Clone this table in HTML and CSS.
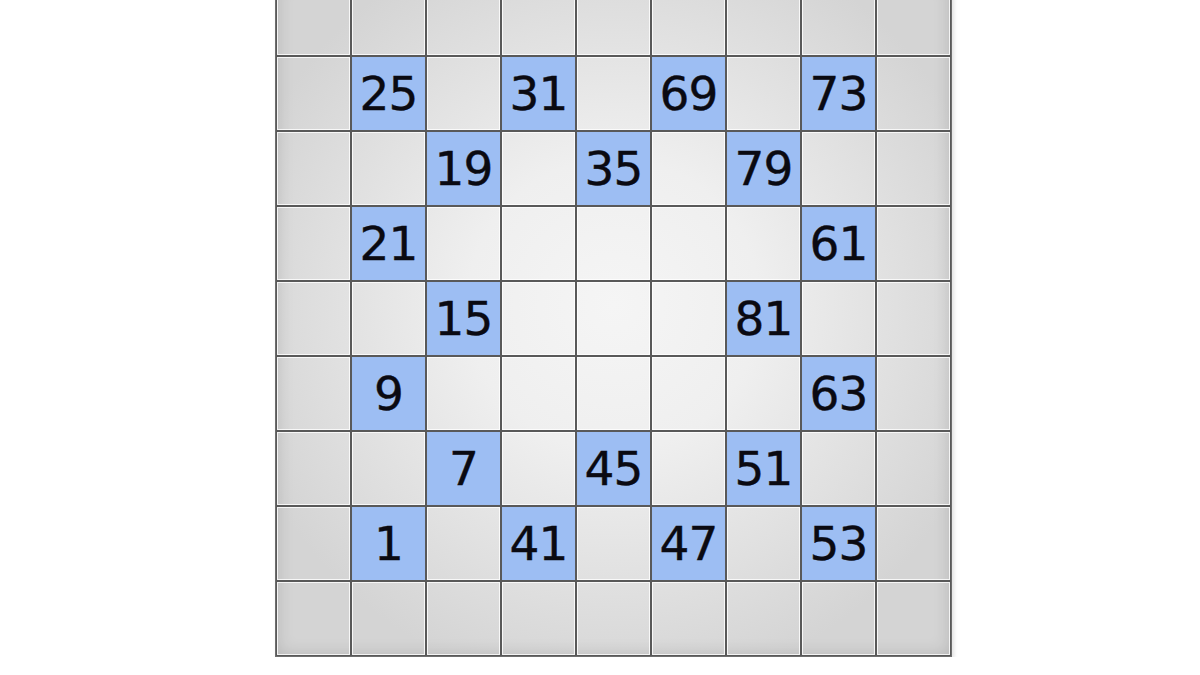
FILE: index.html
```html
<!DOCTYPE html>
<html lang="en">
<head>
    <meta charset="UTF-8">
    <meta name="viewport" content="width=device-width, initial-scale=1.0">
    <title>Number Grid</title>
    <link rel="stylesheet" href="styles.css">
</head>
<body>

<div class="board">
    <!-- row 0 -->
    <div class="cell"></div><div class="cell"></div><div class="cell"></div><div class="cell"></div><div class="cell"></div><div class="cell"></div><div class="cell"></div><div class="cell"></div><div class="cell"></div>
    <!-- row 1 -->
    <div class="cell"></div><div class="cell on">25</div><div class="cell"></div><div class="cell on">31</div><div class="cell"></div><div class="cell on">69</div><div class="cell"></div><div class="cell on">73</div><div class="cell"></div>
    <!-- row 2 -->
    <div class="cell"></div><div class="cell"></div><div class="cell on">19</div><div class="cell"></div><div class="cell on">35</div><div class="cell"></div><div class="cell on">79</div><div class="cell"></div><div class="cell"></div>
    <!-- row 3 -->
    <div class="cell"></div><div class="cell on">21</div><div class="cell"></div><div class="cell"></div><div class="cell"></div><div class="cell"></div><div class="cell"></div><div class="cell on">61</div><div class="cell"></div>
    <!-- row 4 -->
    <div class="cell"></div><div class="cell"></div><div class="cell on">15</div><div class="cell"></div><div class="cell"></div><div class="cell"></div><div class="cell on">81</div><div class="cell"></div><div class="cell"></div>
    <!-- row 5 -->
    <div class="cell"></div><div class="cell on">9</div><div class="cell"></div><div class="cell"></div><div class="cell"></div><div class="cell"></div><div class="cell"></div><div class="cell on">63</div><div class="cell"></div>
    <!-- row 6 -->
    <div class="cell"></div><div class="cell"></div><div class="cell on">7</div><div class="cell"></div><div class="cell on">45</div><div class="cell"></div><div class="cell on">51</div><div class="cell"></div><div class="cell"></div>
    <!-- row 7 -->
    <div class="cell"></div><div class="cell on">1</div><div class="cell"></div><div class="cell on">41</div><div class="cell"></div><div class="cell on">47</div><div class="cell"></div><div class="cell on">53</div><div class="cell"></div>
    <!-- row 8 -->
    <div class="cell"></div><div class="cell"></div><div class="cell"></div><div class="cell"></div><div class="cell"></div><div class="cell"></div><div class="cell"></div><div class="cell"></div><div class="cell"></div>
</div>

</body>
</html>
```

FILE: styles.css
```css
body {
    margin: 0;
    background-color: #fff;
    font-family: "DejaVu Sans", Verdana, sans-serif;
    overflow: hidden;
}

.board {
    display: grid;
    grid-template-columns: repeat(9, 75px);
    grid-auto-rows: 75px;
    width: 675px;
    margin: -20px 0 0 275px;
    border: 1px solid #6e6e6e;
    background: radial-gradient(circle at 50% 48%, #f5f5f5 0%, #efefef 30%, #e0e0e0 58%, #d4d4d4 80%);
    box-shadow: inset 0 0 18px rgba(0, 0, 0, 0.16), 2px 2px 4px rgba(0, 0, 0, 0.12);
}

.cell {
    box-sizing: border-box;
    border: 1px solid #595959;
    box-shadow: inset 0 0 0 1px rgba(255, 255, 255, 0.8);
    display: flex;
    align-items: center;
    justify-content: center;
    font-size: 47px;
    color: #0a0a12;
    letter-spacing: -1px;
    -webkit-text-stroke: 0.4px #0a0a12;
}

.cell.on {
    background-color: #9dbef3;
    box-shadow: none;
}
```
